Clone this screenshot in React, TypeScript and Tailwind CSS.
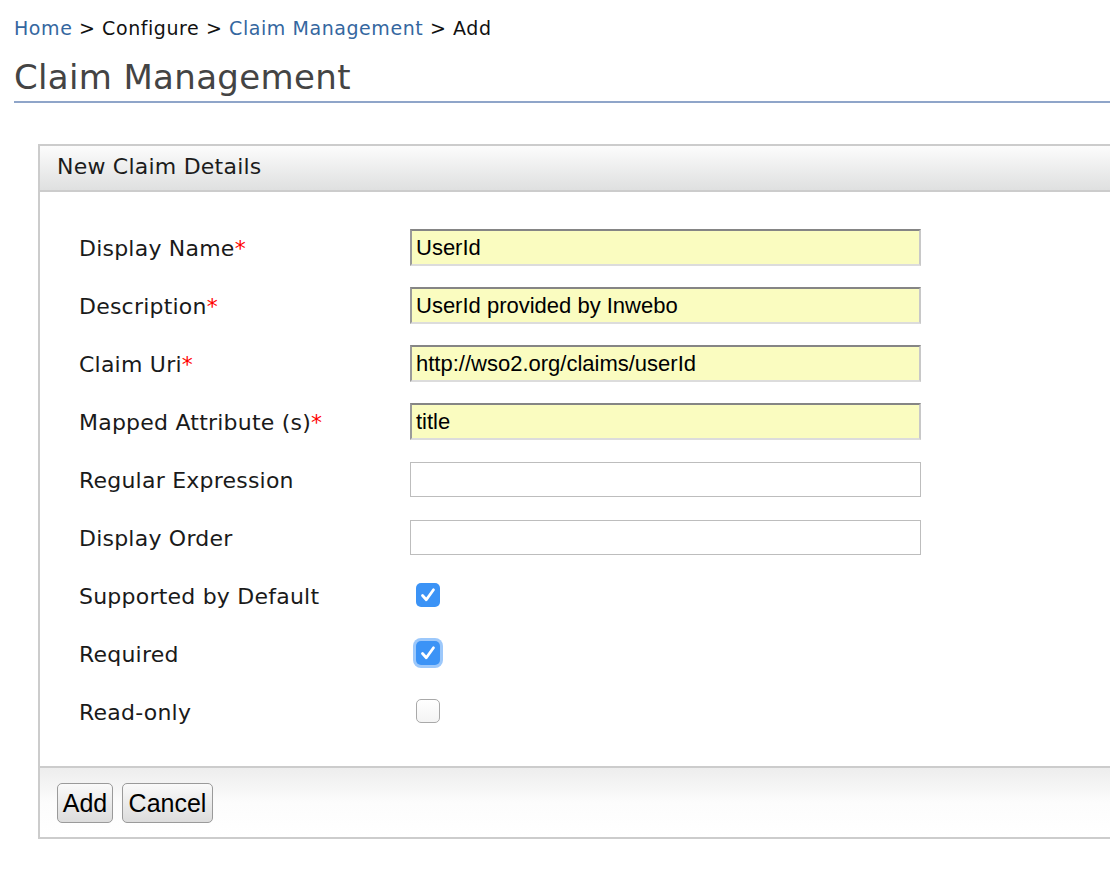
import React from 'react';

const lucida = { fontFamily: '"DejaVu Sans", "Lucida Grande", sans-serif' };
const arial = { fontFamily: '"Liberation Sans", Arial, sans-serif' };

type Field = { label: string; required?: boolean; value?: string };

const textFields: Field[] = [
  { label: 'Display Name', required: true, value: 'UserId' },
  { label: 'Description', required: true, value: 'UserId provided by Inwebo' },
  { label: 'Claim Uri', required: true, value: 'http://wso2.org/claims/userId' },
  { label: 'Mapped Attribute (s)', required: true, value: 'title' },
  { label: 'Regular Expression' },
  { label: 'Display Order' },
];

const checkFields = [
  { label: 'Supported by Default', checked: true, focused: false },
  { label: 'Required', checked: true, focused: true },
  { label: 'Read-only', checked: false, focused: false },
];

function Check({ checked, focused }: { checked: boolean; focused: boolean }) {
  if (!checked) {
    return (
      <div className="w-[24px] h-[24px] rounded-[5px] border border-[#a9a9a9] bg-gradient-to-b from-white to-[#f4f4f4]" />
    );
  }
  return (
    <div
      className={
        'w-[24px] h-[24px] rounded-[5px] bg-[#3b93f6] flex items-center justify-center ' +
        (focused ? 'ring-[3px] ring-[#9cc8fb]' : '')
      }
    >
      <svg width="20" height="20" viewBox="0 0 20 20">
        <path d="M4.5 10.5 L8.3 14.8 L15.5 4.8" fill="none" stroke="white" strokeWidth="2.8" strokeLinecap="round" strokeLinejoin="round" />
      </svg>
    </div>
  );
}

function Label({ text, required }: { text: string; required?: boolean }) {
  return (
    <div className="w-[331px] shrink-0 pt-[3px] text-[22px] tracking-[0.01em] text-[#1a1a1a]" style={lucida}>
      {text}
      {required && <span className="text-[#f00]">*</span>}
    </div>
  );
}

export default function App() {
  return (
    <div className="min-h-screen w-full bg-white overflow-hidden">
      {/* breadcrumb */}
      <div className="pl-[14px] pt-[15px] text-[19px] leading-[26px] tracking-[0.03em] text-[#111]" style={lucida}>
        <a className="text-[#35679f]">Home</a> &gt; Configure &gt;{' '}
        <a className="text-[#35679f]">Claim Management</a> &gt; Add
      </div>

      <h1 className="pl-[14px] mt-[16px] text-[34px] leading-[40px] tracking-[0.01em] text-[#444]" style={lucida}>
        Claim Management
      </h1>
      <div className="ml-[14px] mt-[4px] h-[2px] bg-[#8fa5c9]" />

      {/* panel */}
      <div className="ml-[38px] mt-[41px] border-l-2 border-t-2 border-b-2 border-[#cccccc]">
        <div className="h-[46px] border-b-2 border-[#cccccc] bg-gradient-to-b from-[#fcfcfc] to-[#dfe0e0] flex items-center pl-[17px] pb-[3px]">
          <span className="text-[22px] tracking-[0.01em] text-[#1c1c1c]" style={lucida}>
            New Claim Details
          </span>
        </div>

        <div className="pl-[39px] py-[26px]">
          {textFields.map((f) => (
            <div key={f.label} className="h-[58px] flex items-center">
              <Label text={f.label} required={f.required} />
              {f.value !== undefined ? (
                <div
                  className="w-[511px] h-[37px] bg-[#fafcc0] border-2 border-t-[#858585] border-l-[#9a9a9a] border-r-[#c8c8c8] border-b-[#dcdcdc] flex items-center pl-[4px] text-[22px] text-black"
                  style={arial}
                >
                  {f.value}
                </div>
              ) : (
                <div className="w-[511px] h-[35px] bg-white border border-[#bdbdbd]" />
              )}
            </div>
          ))}
          {checkFields.map((f) => (
            <div key={f.label} className="h-[58px] flex items-center">
              <Label text={f.label} />
              <div className="ml-[6px]">
                <Check checked={f.checked} focused={f.focused} />
              </div>
            </div>
          ))}
        </div>

        <div className="h-[71px] border-t-2 border-[#cccccc] bg-gradient-to-b from-[#ededed] via-[#fcfcfc] to-white pl-[17px] pt-[15px] flex gap-[9px] items-start">
          <button
            className="h-[40px] w-[56px] rounded-[5px] border border-[#9a9a9a] bg-gradient-to-b from-[#fafafa] to-[#dcdcdc] text-[25px] leading-none text-black"
            style={arial}
          >
            Add
          </button>
          <button
            className="h-[40px] w-[91px] rounded-[5px] border border-[#9a9a9a] bg-gradient-to-b from-[#fafafa] to-[#dcdcdc] text-[25px] leading-none text-black"
            style={arial}
          >
            Cancel
          </button>
        </div>
      </div>
    </div>
  );
}
